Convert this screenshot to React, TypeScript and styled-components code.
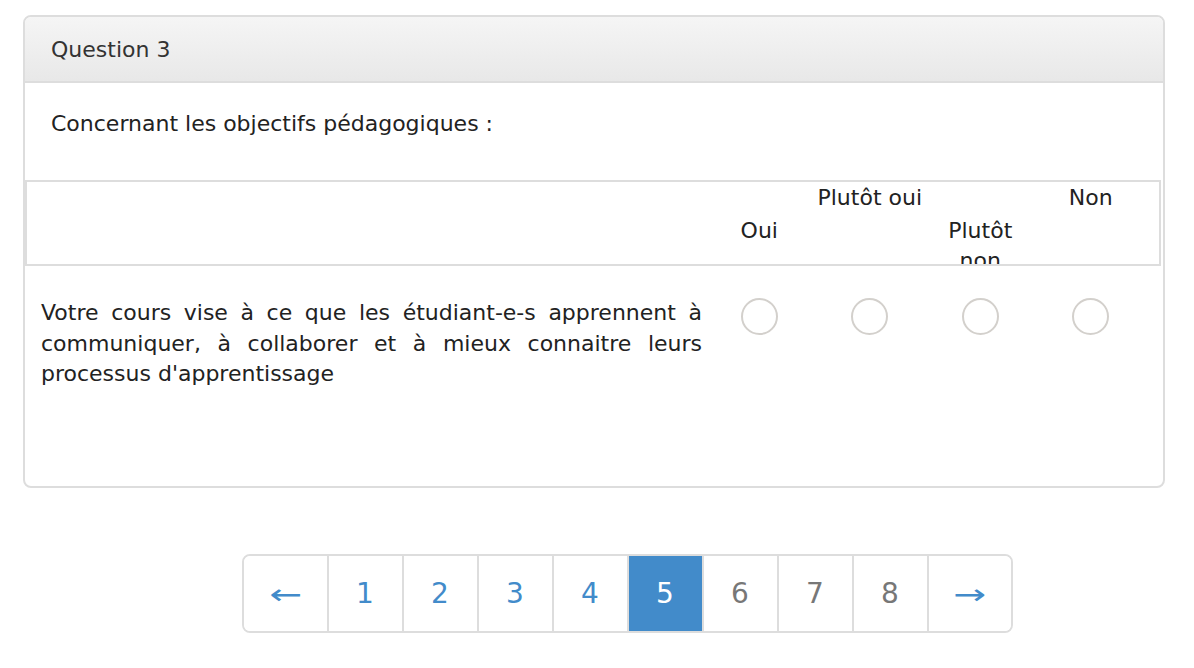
import React from "react";
import styled, { createGlobalStyle } from "styled-components";

const Global = createGlobalStyle`
  html, body { margin: 0; padding: 0; background: #fff; }
  body { font-family: "DejaVu Sans", Verdana, sans-serif; color: #333; }
`;

const Page = styled.div`
  padding: 15px 29px 0 23px;
  width: 1142px;
`;

const Panel = styled.section`
  border: 2px solid #ddd;
  border-radius: 8px;
  overflow: hidden;
  background: #fff;
`;

const PanelHeader = styled.header`
  height: 64px;
  display: flex;
  align-items: center;
  padding: 0 26px;
  font-size: 22px;
  color: #333;
  background: linear-gradient(to bottom, #f5f5f5, #e8e8e8);
  border-bottom: 2px solid #ddd;
`;

const Intro = styled.p`
  margin: 0;
  padding: 25px 26px 40px;
  font-size: 22px;
  line-height: 32px;
  color: #222;
`;

const HeadGrid = styled.div`
  display: grid;
  grid-template-columns: 1fr repeat(4, 110.5px);
  padding-right: 13px;
  margin-right: 2px;
  border: 2px solid #ddd;
`;

const HeadCell = styled.div<{ $low?: boolean }>`
  height: 82px;
  overflow: hidden;
  box-sizing: border-box;
  padding-top: ${(p) => (p.$low ? "34px" : "1px")};
  font-size: 22px;
  line-height: 30px;
  color: #222;
  text-align: center;
`;

const HeadLabel = styled.span`
  display: inline-block;
  max-width: 108px;
`;

const BodyGrid = styled.div`
  display: grid;
  grid-template-columns: 1fr repeat(4, 110.5px);
  padding: 0 17px 0 2px;
`;

const QuestionText = styled.div`
  padding: 32px 2px 96px 14px;
  font-size: 22px;
  line-height: 30.5px;
  text-align: justify;
  color: #222;
`;

const RadioCell = styled.div`
  display: flex;
  justify-content: center;
  padding-top: 32px;
`;

const Radio = styled.span`
  display: block;
  width: 33px;
  height: 33px;
  border-radius: 50%;
  border: 2px solid #d3d0cc;
  background: #fff;
`;

const Pager = styled.nav`
  display: flex;
  margin: 66px 0 0 219px;
  width: max-content;
  border: 2px solid #ddd;
  border-radius: 8px;
  overflow: hidden;
`;

const PageItem = styled.span<{ $active?: boolean; $muted?: boolean; $wide?: boolean }>`
  display: flex;
  align-items: center;
  justify-content: center;
  width: ${(p) => (p.$wide ? "82.5px" : "73px")};
  height: 75px;
  font-size: 28px;
  font-family: "DejaVu Sans", Verdana, sans-serif;
  color: ${(p) => (p.$active ? "#fff" : p.$muted ? "#777" : "#428bca")};
  background: ${(p) => (p.$active ? "#428bca" : "#fff")};
  & + & {
    border-left: 2px solid #ddd;
  }
`;

const Arrow = styled.span`
  display: inline-block;
  font-family: "DejaVu Sans", Verdana, sans-serif;
  font-size: 28px;
  line-height: 1;
  padding-top: 4px;
  transform: scaleX(1.4);
`;

const columns = [
  { label: "Oui", low: true },
  { label: "Plutôt oui", low: false },
  { label: "Plutôt non", low: true },
  { label: "Non", low: false },
];

const pages = [1, 2, 3, 4, 5, 6, 7, 8];

export default function App() {
  return (
    <>
      <Global />
      <Page>
        <Panel>
          <PanelHeader>Question 3</PanelHeader>
          <Intro>Concernant les objectifs pédagogiques :</Intro>
          <HeadGrid>
            <HeadCell />
            {columns.map((c) => (
              <HeadCell key={c.label} $low={c.low}>
                <HeadLabel>{c.label}</HeadLabel>
              </HeadCell>
            ))}
          </HeadGrid>
          <BodyGrid>
            <QuestionText>
              Votre cours vise à ce que les étudiant-e-s apprennent à communiquer, à collaborer et à mieux
              connaitre leurs processus d'apprentissage
            </QuestionText>
            {columns.map((c) => (
              <RadioCell key={c.label}>
                <Radio />
              </RadioCell>
            ))}
          </BodyGrid>
        </Panel>
        <Pager>
          <PageItem $wide>
            <Arrow>←</Arrow>
          </PageItem>
          {pages.map((n) => (
            <PageItem key={n} $active={n === 5} $muted={n > 5}>
              {n}
            </PageItem>
          ))}
          <PageItem $wide>
            <Arrow>→</Arrow>
          </PageItem>
        </Pager>
      </Page>
    </>
  );
}
